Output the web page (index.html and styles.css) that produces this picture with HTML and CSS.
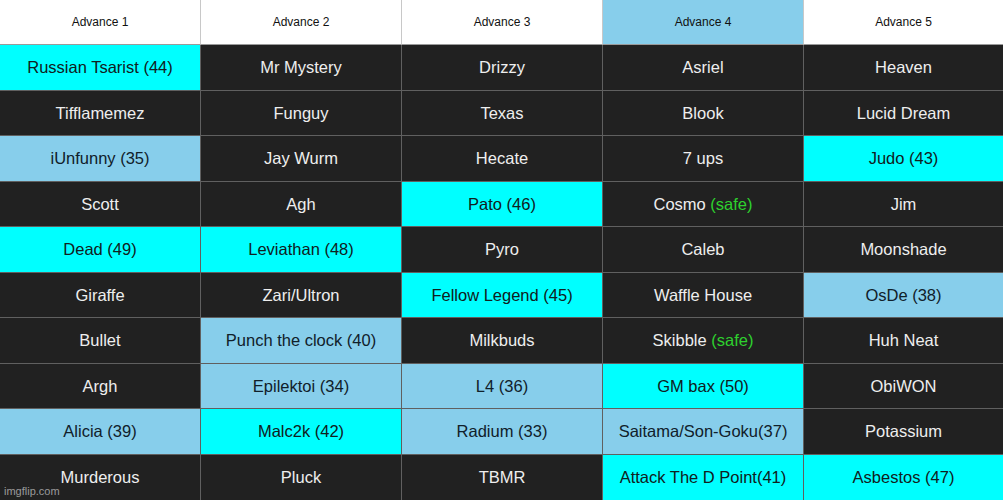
FILE: index.html
```html
<!DOCTYPE html>
<html>
<head>
<meta charset="utf-8">
<link rel="stylesheet" href="styles.css">
</head>
<body>
<div class="board">
  <div class="h">Advance 1</div>
  <div class="h">Advance 2</div>
  <div class="h">Advance 3</div>
  <div class="h sky">Advance 4</div>
  <div class="h last">Advance 5</div>

  <div class="c cy">Russian Tsarist (44)</div>
  <div class="c">Mr Mystery</div>
  <div class="c">Drizzy</div>
  <div class="c">Asriel</div>
  <div class="c last">Heaven</div>

  <div class="c">Tifflamemez</div>
  <div class="c">Funguy</div>
  <div class="c">Texas</div>
  <div class="c">Blook</div>
  <div class="c last">Lucid Dream</div>

  <div class="c sky">iUnfunny (35)</div>
  <div class="c">Jay Wurm</div>
  <div class="c">Hecate</div>
  <div class="c">7 ups</div>
  <div class="c cy last">Judo (43)</div>

  <div class="c">Scott</div>
  <div class="c">Agh</div>
  <div class="c cy">Pato (46)</div>
  <div class="c">Cosmo&nbsp;<span class="safe">(safe)</span></div>
  <div class="c last">Jim</div>

  <div class="c cy">Dead (49)</div>
  <div class="c cy">Leviathan (48)</div>
  <div class="c">Pyro</div>
  <div class="c">Caleb</div>
  <div class="c last">Moonshade</div>

  <div class="c">Giraffe</div>
  <div class="c">Zari/Ultron</div>
  <div class="c cy">Fellow Legend (45)</div>
  <div class="c">Waffle House</div>
  <div class="c sky last">OsDe (38)</div>

  <div class="c">Bullet</div>
  <div class="c sky">Punch the clock (40)</div>
  <div class="c">Milkbuds</div>
  <div class="c">Skibble&nbsp;<span class="safe">(safe)</span></div>
  <div class="c last">Huh Neat</div>

  <div class="c">Argh</div>
  <div class="c sky">Epilektoi (34)</div>
  <div class="c sky">L4 (36)</div>
  <div class="c cy">GM bax (50)</div>
  <div class="c last">ObiWON</div>

  <div class="c sky">Alicia (39)</div>
  <div class="c cy">Malc2k (42)</div>
  <div class="c sky">Radium (33)</div>
  <div class="c sky">Saitama/Son-Goku(37)</div>
  <div class="c last">Potassium</div>

  <div class="c bottom">Murderous</div>
  <div class="c bottom">Pluck</div>
  <div class="c bottom">TBMR</div>
  <div class="c cy bottom">Attack The D Point(41)</div>
  <div class="c cy bottom last">Asbestos (47)</div>

  <div class="mark">imgflip.com</div>
</div>
</body>
</html>
```
FILE: styles.css
```css
html, body {
  margin: 0;
  padding: 0;
  background: #212121;
}
.board {
  position: relative;
  width: 1003px;
  height: 500px;
  display: grid;
  grid-template-columns: 201px 201px 201px 201px 199px;
  grid-template-rows: 45px repeat(10, 1fr);
  font-family: "Liberation Sans", Arial, sans-serif;
}
.h, .c {
  box-sizing: border-box;
  display: flex;
  align-items: center;
  justify-content: center;
  border-right: 1px solid #606060;
  border-bottom: 1px solid #606060;
  white-space: nowrap;
}
.h {
  background: #ffffff;
  color: #111;
  font-size: 12px;
  border-right-color: #c8c8c8;
  border-bottom-color: #9a9a9a;
}
.c {
  background: #212121;
  color: #eeeeee;
  font-size: 16.5px;
  padding-top: 1px;
}
.last { border-right: none; }
.bottom { border-bottom: none; }
.cy { background: #00ffff; color: #102020; }
.sky { background: #87ceeb; color: #10202a; }
.h.sky { color: #111; }
.safe { color: #2ed12e; }
.mark {
  position: absolute;
  left: 4px;
  bottom: 3px;
  font-size: 11px;
  color: rgba(255,255,255,0.55);
  font-family: "Liberation Sans", Arial, sans-serif;
}
```
